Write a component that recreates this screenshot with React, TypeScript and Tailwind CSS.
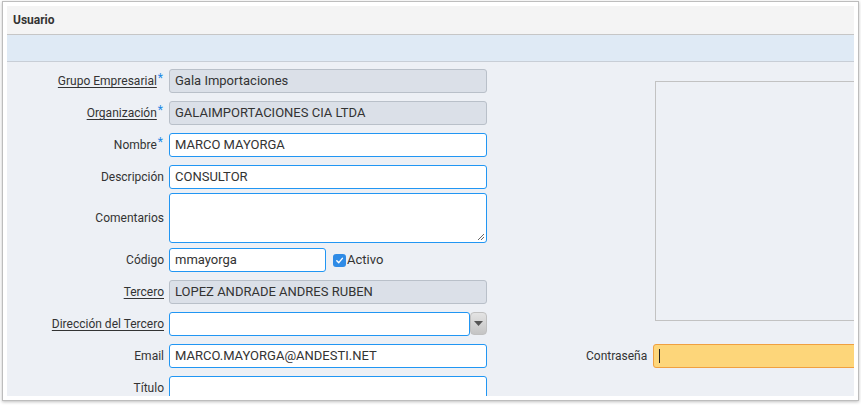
import React from 'react';

const font = { fontFamily: 'Roboto, "Liberation Sans", sans-serif' };

function Label({ text, link, req }: { text: string; link?: boolean; req?: boolean }) {
  return (
    <div className="w-[157px] shrink-0 flex justify-end items-center text-[12px] text-[#333]">
      <span className={link ? 'underline underline-offset-2' : ''}>{text}</span>
      {req && (
        <span className="text-[#1e88e5] text-[12px] leading-none self-start mt-[3px] ml-[1px] mr-[1px]">*</span>
      )}
    </div>
  );
}

function Field({ value, ro, w = 'w-[318px]' }: { value?: string; ro?: boolean; w?: string }) {
  return (
    <div
      className={`${w} h-[24px] rounded-[3px] border px-[5px] flex items-center text-[13px] text-[#333] ${
        ro ? 'bg-[#dbe0e8] border-[#b9c0c9]' : 'bg-white border-[#2196f3]'
      }`}
    >
      {value}
    </div>
  );
}

export default function App() {
  return (
    <div className="w-[861px] h-[405px] bg-white overflow-hidden" style={font}>
      <div className="mt-[1px] ml-[2px] w-[857px] h-[400px] border border-[#bdbdbd] bg-white p-[4px] shadow-[0_1px_3px_rgba(0,0,0,0.25)]">
        <div className="w-[847px] h-[390px] overflow-hidden flex flex-col bg-[#edf0f5]">
          <div className="h-[29px] shrink-0 bg-[#f4f4f4] border-b border-[#c6c6c6] flex items-center pl-[6px] text-[12px] font-bold text-[#333]">
            Usuario
          </div>
          <div className="h-[27px] shrink-0 bg-[#dfeaf5] border-b border-[#c8ced6]" />
          <div className="flex pt-[7px]">
            <div className="flex flex-col w-[480px] shrink-0">
              <div className="flex gap-[5px] h-[24px]">
                <Label text="Grupo Empresarial" link req />
                <Field value="Gala Importaciones" ro />
              </div>
              <div className="flex gap-[5px] h-[24px] mt-[8px]">
                <Label text="Organización" link req />
                <Field value="GALAIMPORTACIONES CIA LTDA" ro />
              </div>
              <div className="flex gap-[5px] h-[24px] mt-[8px]">
                <Label text="Nombre" req />
                <Field value="MARCO MAYORGA" />
              </div>
              <div className="flex gap-[5px] h-[24px] mt-[8px]">
                <Label text="Descripción" />
                <Field value="CONSULTOR" />
              </div>
              <div className="flex gap-[5px] h-[50px] mt-[4px]">
                <Label text="Comentarios" />
                <div className="relative w-[318px] h-[50px] rounded-[3px] border border-[#2196f3] bg-white">
                  <svg className="absolute right-[1px] bottom-[1px]" width="9" height="9" viewBox="0 0 9 9">
                    <path d="M8 2 L2 8 M8 5 L5 8" stroke="#666" strokeWidth="1" />
                  </svg>
                </div>
              </div>
              <div className="flex gap-[5px] h-[24px] mt-[5px] items-center">
                <Label text="Código" />
                <Field value="mmayorga" w="w-[157px]" />
                <span className="ml-[2px] w-[13px] h-[13px] rounded-[3px] bg-[#2f8be6] flex items-center justify-center">
                  <svg width="9" height="9" viewBox="0 0 10 10">
                    <path d="M2 5.2 L4.2 7.4 L8.2 2.6" fill="none" stroke="white" strokeWidth="1.6" strokeLinecap="round" strokeLinejoin="round" />
                  </svg>
                </span>
                <span className="-ml-[4px] text-[13px] text-[#333]">Activo</span>
              </div>
              <div className="flex gap-[5px] h-[24px] mt-[8px]">
                <Label text="Tercero" link />
                <Field value="LOPEZ ANDRADE ANDRES RUBEN" ro />
              </div>
              <div className="flex gap-[5px] h-[24px] mt-[8px]">
                <Label text="Dirección del Tercero" link />
                <div className="flex">
                  <Field w="w-[301px]" />
                  <div className="w-[17px] h-[23px] rounded-[4px] bg-gradient-to-b from-[#e4e4e4] to-[#c4c4c4] border border-[#c0c0c0] flex items-center justify-center">
                    <svg width="9" height="5" viewBox="0 0 9 5">
                      <path d="M0 0 H9 L4.5 5 Z" fill="#555" />
                    </svg>
                  </div>
                </div>
              </div>
              <div className="flex gap-[5px] h-[24px] mt-[8px]">
                <Label text="Email" />
                <Field value="MARCO.MAYORGA@ANDESTI.NET" />
              </div>
              <div className="flex gap-[5px] h-[24px] mt-[8px]">
                <Label text="Título" />
                <Field />
              </div>
            </div>
            <div className="flex flex-col">
              <div className="ml-[168px] mt-[12px] w-[240px] h-[240px] border border-[#c2c2c2]" />
              <div className="flex items-center gap-[6px] mt-[23px] ml-[99px] h-[24px]">
                <span className="text-[12px] text-[#333]">Contraseña</span>
                <div className="w-[240px] h-[24px] rounded-[3px] border border-[#f0a040] bg-[#fdd67a] flex items-center pl-[5px]">
                  <span className="w-[1px] h-[14px] bg-[#222]" />
                </div>
              </div>
            </div>
          </div>
        </div>
      </div>
    </div>
  );
}
